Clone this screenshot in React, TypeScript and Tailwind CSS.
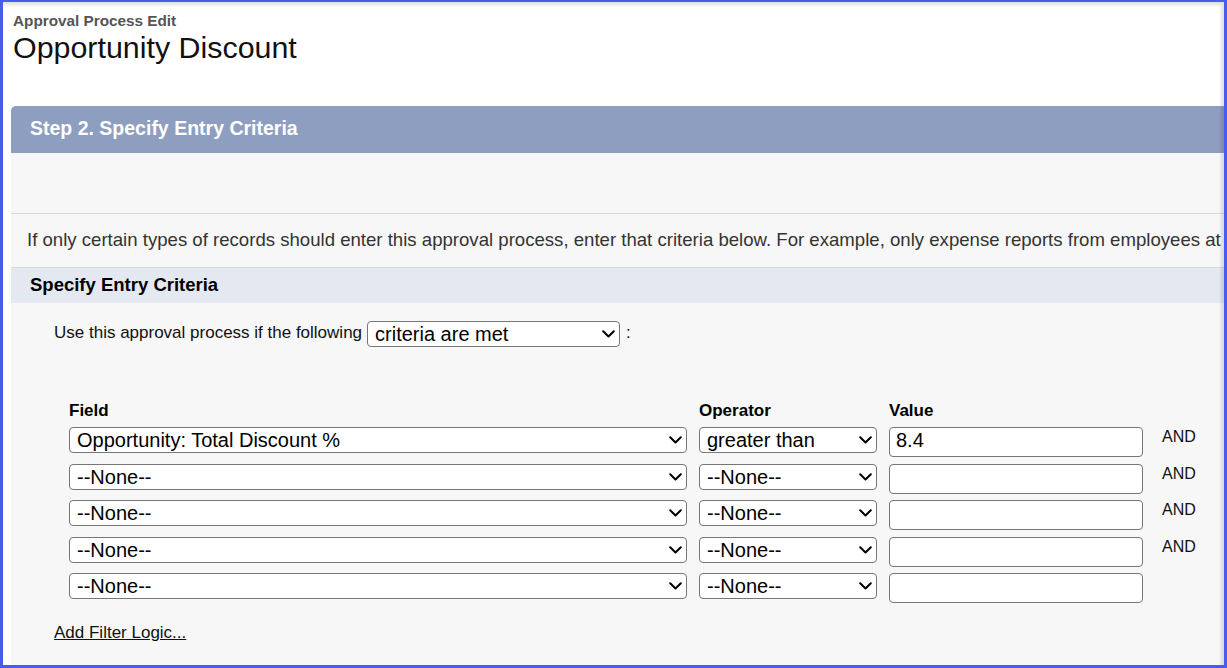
import React from "react";

interface Row {
  field: string;
  op: string;
  value: string;
  and: boolean;
}

const rows: Row[] = [
  { field: "Opportunity: Total Discount %", op: "greater than", value: "8.4", and: true },
  { field: "--None--", op: "--None--", value: "", and: true },
  { field: "--None--", op: "--None--", value: "", and: true },
  { field: "--None--", op: "--None--", value: "", and: true },
  { field: "--None--", op: "--None--", value: "", and: false },
];

function Chevron() {
  return (
    <svg width="13" height="8" viewBox="0 0 13 8" className="flex-none">
      <polyline points="1.2,1.2 6.5,6.5 11.8,1.2" fill="none" stroke="#000" strokeWidth="2" strokeLinecap="round" strokeLinejoin="round" />
    </svg>
  );
}

function FakeSelect({ label, width }: { label: string; width: string }) {
  return (
    <div className={`${width} flex h-[26px] flex-none items-center justify-between rounded-[4px] border border-[#767676] bg-white pl-[7px] pr-[4px]`}>
      <span className="whitespace-nowrap text-[20px] leading-none text-black">{label}</span>
      <Chevron />
    </div>
  );
}

export default function App() {
  return (
    <div className="relative h-[668px] w-[1227px] overflow-hidden border-x-[3px] border-t-2 border-b-[3px] border-[#4a5cec] bg-white font-['Liberation_Sans',Arial,sans-serif]">
      {/* Title */}
      <div className="pl-[10px] pt-[11px]">
        <p className="text-[15.3px] font-bold leading-none text-[#555]">Approval Process Edit</p>
        <h1 className="mt-[4px] text-[30.4px] leading-none text-[#111]">Opportunity Discount</h1>
      </div>

      {/* Step panel */}
      <div className="ml-[8px] mt-[43.3px] w-[1300px]">
        <div className="flex h-[47px] items-center rounded-tl-[5px] bg-[#8e9ec0] pb-[1px] pl-[19px]">
          <h2 className="text-[19.5px] font-bold leading-none text-white">Step 2. Specify Entry Criteria</h2>
        </div>

        <div className="bg-[#f7f7f7]">
          <div className="h-[61px] border-b border-[#dadada]" />
          <div className="h-[54px] border-b border-[#dadada] pl-[16px] pt-[17px]">
            <p className="whitespace-nowrap text-[18.6px] leading-none text-[#333]">
              If only certain types of records should enter this approval process, enter that criteria below. For example, only expense reports from employees at
            </p>
          </div>
          <div className="flex h-[35px] items-center bg-[#e3e8f1] pl-[19px]">
            <h3 className="text-[18.5px] font-bold leading-none text-black">Specify Entry Criteria</h3>
          </div>

          <div className="h-[400px] pl-[43px] pt-[18px]">
            <div className="flex items-start">
              <span className="mt-[3px] whitespace-nowrap text-[17px] leading-none text-[#111]">
                Use this approval process if the following
              </span>
              <div className="ml-[5px]">
                <FakeSelect label="criteria are met" width="w-[253px]" />
              </div>
              <span className="ml-[6px] mt-[3px] text-[17px] leading-none text-[#111]">:</span>
            </div>

            <div className="ml-[15px] mt-[55px]">
              <div className="grid grid-cols-[618px_178px_254px] gap-x-[12px] text-[17px] font-bold leading-none text-black">
                <span>Field</span>
                <span>Operator</span>
                <span>Value</span>
              </div>

              <div className="mt-[8px] flex flex-col">
                {rows.map((r, i) => (
                  <div key={i} className="flex h-[36.5px] items-start gap-[12px]">
                    <FakeSelect label={r.field} width="w-[618px]" />
                    <FakeSelect label={r.op} width="w-[178px]" />
                    <div className="h-[30px] w-[254px] flex-none rounded-[4px] border border-[#767676] bg-white pl-[6px] pt-[2px]">
                      <span className="text-[20px] leading-none text-black">{r.value}</span>
                    </div>
                    {r.and && <span className="ml-[7px] mt-[2px] text-[16px] leading-none text-[#111]">AND</span>}
                  </div>
                ))}
              </div>
            </div>

            <a href="#" className="mt-[14px] inline-block text-[17px] leading-none text-[#111] underline">
              Add Filter Logic...
            </a>
          </div>
        </div>
      </div>

      {/* soft inner shadow over the frame */}
      <div className="pointer-events-none absolute inset-0 shadow-[inset_-3px_3px_3px_rgba(0,0,0,0.12)]" />
    </div>
  );
}
